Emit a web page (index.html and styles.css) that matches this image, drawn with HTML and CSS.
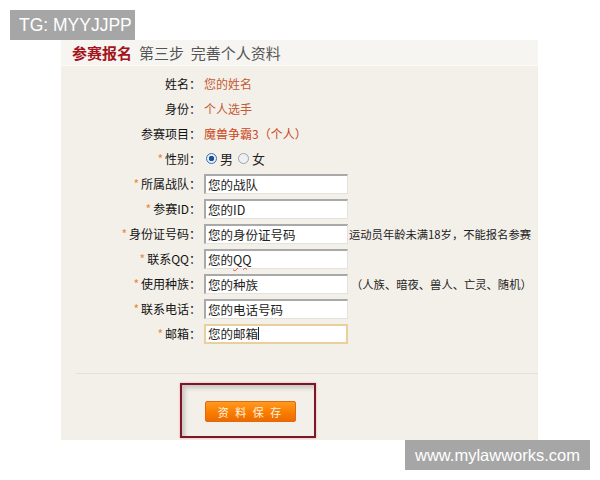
FILE: index.html
```html
<!DOCTYPE html>
<html lang="zh-CN">
<head>
<meta charset="utf-8">
<title>参赛报名</title>
<link rel="stylesheet" href="styles.css">
</head>
<body>
<div class="wm wm-top">TG: MYYJJPP</div>
<div class="panel">
  <div class="head"><span class="title">参赛报名</span><span class="step">第三步&nbsp;&nbsp;完善个人资料</span></div>
  <div class="form">
    <div class="row"><div class="lbl">姓名：</div><div class="val red">您的姓名</div></div>
    <div class="row"><div class="lbl">身份：</div><div class="val red">个人选手</div></div>
    <div class="row"><div class="lbl">参赛项目：</div><div class="val red2">魔兽争霸3（个人）</div></div>
    <div class="row"><div class="lbl"><span class="star">*</span>性别：</div><div class="val radios"><span class="radio on"></span><span class="rt">男</span><span class="radio"></span><span class="rt">女</span></div></div>
    <div class="row"><div class="lbl"><span class="star">*</span>所属战队：</div><div class="val"><span class="inp">您的战队</span></div></div>
    <div class="row"><div class="lbl"><span class="star">*</span>参赛ID：</div><div class="val"><span class="inp">您的ID</span></div></div>
    <div class="row"><div class="lbl"><span class="star">*</span>身份证号码：</div><div class="val"><span class="inp">您的身份证号码</span><span class="hint">运动员年龄未满18岁，不能报名参赛</span></div></div>
    <div class="row"><div class="lbl"><span class="star">*</span>联系QQ：</div><div class="val"><span class="inp">您的<span class="sq">QQ</span></span></div></div>
    <div class="row"><div class="lbl"><span class="star">*</span>使用种族：</div><div class="val"><span class="inp">您的种族</span><span class="hint hint2">（人族、暗夜、兽人、亡灵、随机）</span></div></div>
    <div class="row"><div class="lbl"><span class="star">*</span>联系电话：</div><div class="val"><span class="inp">您的电话号码</span></div></div>
    <div class="row"><div class="lbl"><span class="star">*</span>邮箱：</div><div class="val"><span class="inp focus">您的邮箱<span class="caret"></span></span></div></div>
  </div>
  <div class="sep"></div>
  <div class="foot">
    <div class="mark"><span class="btn">资 料 保 存</span></div>
  </div>
</div>
<div class="wm wm-bot">www.mylawworks.com</div>
</body>
</html>
```
FILE: styles.css
```css
html, body {
  margin: 0;
  padding: 0;
  background: #ffffff;
}
body {
  width: 600px;
  height: 480px;
  position: relative;
  overflow: hidden;
  font-family: "Noto Sans CJK SC", "Noto Sans", sans-serif;
  font-size: 12px;
  color: #222;
}
.wm {
  position: absolute;
  background: #a6a6a6;
  color: #fff;
  font-family: "Liberation Sans", Arial, sans-serif;
  height: 30px;
  line-height: 30px;
  box-sizing: border-box;
  white-space: nowrap;
}
.wm-top { left: 10px; top: 10px; width: 125px; font-size: 17.5px; padding-left: 9px; }
.wm-bot { left: 405px; top: 440px; width: 185px; font-size: 16.5px; padding-left: 10px; }

.panel {
  margin: 40px 0 0 61px;
  width: 477px;
  height: 400px;
  background: #f3f0e9;
}
.head {
  height: 25px;
  background: #f6f5f2;
  border-bottom: 1px solid #fbfaf7;
  display: flex;
  align-items: center;
  padding-left: 11px;
  font-size: 15px;
}
.title { color: #a3141c; font-weight: bold; margin-right: 7px; }
.step { color: #555; }

.form { padding-top: 5px; }
.row {
  display: flex;
  align-items: center;
  height: 25px;
}
.lbl {
  width: 140px;
  flex-shrink: 0;
  text-align: right;
  color: #111;
  white-space: nowrap;
}
.star { color: #e8883c; margin-right: 2px; }
.val {
  margin-left: 3px;
  display: flex;
  align-items: center;
  white-space: nowrap;
}
.red { color: #c25a35; }
.red2 { color: #cc4420; }
.radios { padding-left: 2px; }
.radio {
  width: 9px;
  height: 9px;
  border-radius: 50%;
  border: 1px solid #9aa3ad;
  background: #eef0f2;
  flex-shrink: 0;
}
.radio.on {
  border-color: #3c6fae;
  background: radial-gradient(circle, #1c4f96 0 2.5px, #e6eef8 3px);
}
.rt { margin: 0 5px 0 3px; font-size: 13px; }

.inp {
  width: 144px;
  height: 20px;
  flex-shrink: 0;
  box-sizing: border-box;
  background: #fff;
  border-top: 2px solid #a9a9a9;
  border-left: 2px solid #a9a9a9;
  border-right: 1px solid #e4e2dc;
  border-bottom: 1px solid #e4e2dc;
  font-size: 12.5px;
  line-height: 17px;
  padding-left: 2px;
  color: #222;
  display: flex;
  align-items: center;
}
.inp.focus {
  border: 2px solid #e8cf9c;
}
.caret {
  display: inline-block;
  width: 1px;
  height: 13px;
  background: #222;
}
.sq {
  text-decoration: underline wavy #e05050;
  text-decoration-thickness: 1px;
  text-underline-offset: 2px;
}
.hint { margin-left: 1px; font-size: 11.3px; color: #222; }
.hint2 { margin-left: 3px; }

.sep {
  margin: 27px 0 0 15px;
  height: 1px;
  background: #e4e0d6;
}
.foot {
  padding: 9px 0 0 119px;
}
.mark {
  width: 136px;
  height: 55px;
  box-sizing: border-box;
  border: 2px solid #7d1626;
  box-shadow: inset 3px 3px 4px #c8c6c0, 0 0 2px #e8a0a8;
  padding: 16px 0 0 23px;
}
.btn {
  display: inline-block;
  width: 91px;
  height: 21px;
  line-height: 21px;
  text-align: center;
  color: #fff4e0;
  font-size: 11px;
  letter-spacing: 2px;
  background: linear-gradient(#ff9a20, #f97d00 55%, #ee6a00);
  border: 1px solid #e06a10;
  box-sizing: border-box;
  border-radius: 2px;
}
```
